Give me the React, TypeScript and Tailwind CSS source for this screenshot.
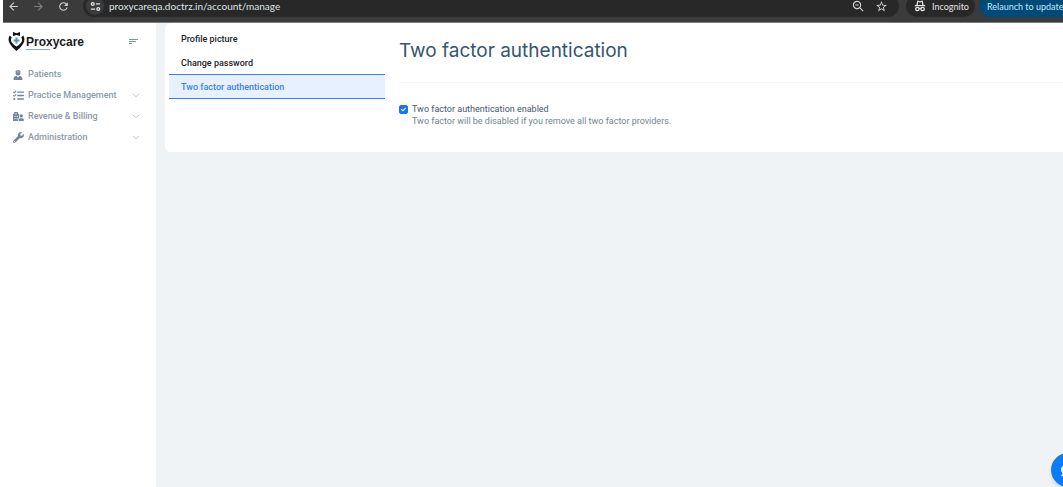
import React from "react";
import { FaTasks, FaHospitalUser, FaWrench, FaCheck, FaComment } from "react-icons/fa";
import { MdArrowBack, MdArrowForward, MdRefresh, MdStarBorder } from "react-icons/md";

function SiteSettingsIcon() {
  return (
    <svg viewBox="0 0 12 12" className="size-[11px]" fill="none" stroke="currentColor" strokeWidth="1.4">
      <circle cx="3" cy="3.2" r="1.5" />
      <path d="M6.5 3.2H11M1 8.8h4.5" />
      <circle cx="9" cy="8.8" r="1.5" />
    </svg>
  );
}

function ZoomOutIcon() {
  return (
    <svg viewBox="0 0 12 12" className="size-3" fill="none" stroke="currentColor" strokeWidth="1.2">
      <circle cx="5" cy="5" r="3.6" />
      <path d="M3.4 5h3.2M7.7 7.7l3.5 3.5" />
    </svg>
  );
}

function IncognitoIcon() {
  return (
    <svg viewBox="0 0 12 12" className="size-3" fill="none" stroke="currentColor" strokeWidth="1.3">
      <path d="M3 5 3.8 1.2 6 1.8l2.2-.6L9 5" />
      <path d="M.8 5.6h10.4" />
      <circle cx="3.4" cy="9" r="1.7" />
      <circle cx="8.6" cy="9" r="1.7" />
      <path d="M5 8.6q1-.6 2 0" />
    </svg>
  );
}

function PatientIcon() {
  return (
    <svg viewBox="0 0 10 10" className="size-[10px]" fill="currentColor">
      <path d="M2.6.8 5 0l2.4.8v2.4a2.4 2.4 0 0 1-4.8 0Z" />
      <path d="M.6 10V8.6Q.6 6.3 3.3 5.8L5 7.4l1.7-1.6q2.7.5 2.7 2.8V10Z" />
      <path d="M3.7 2h2.6" stroke="#fff" strokeWidth=".5" />
    </svg>
  );
}

function ChevronIcon() {
  return (
    <svg viewBox="0 0 8 5" className="h-[5px] w-2 shrink-0 text-[#b3bcc4]" fill="none" stroke="currentColor" strokeWidth="0.9">
      <path d="m1 .8 3 3 3-3" />
    </svg>
  );
}

function BrowserBar() {
  return (
    <header className="ml-[3px] flex h-[23px] items-end overflow-hidden border-b border-[#7a7a7a] bg-[#3b3b3b] pb-[5px] font-['Lato',sans-serif] text-[9px] leading-none text-[#e3e3e3]">
      <div className="flex h-[22px] w-20 shrink-0 items-center gap-3 pl-1 text-[13px]">
        <button aria-label="Back" className="text-[#d0d0d0]"><MdArrowBack /></button>
        <button aria-label="Forward" className="text-[#808080]"><MdArrowForward /></button>
        <button aria-label="Reload" className="text-[#d0d0d0]"><MdRefresh /></button>
      </div>
      <div className="flex h-[22px] grow items-center rounded-full bg-[#282828] pr-[11px]">
        <button aria-label="Site information" className="ml-[3px] flex size-[18px] items-center justify-center rounded-full bg-[#3b3b3b]">
          <SiteSettingsIcon />
        </button>
        <input
          aria-label="Address"
          className="h-3 min-w-0 grow bg-transparent pl-[5px] text-[10px] leading-3 text-[#dfe3e6] outline-none"
          defaultValue="proxycareqa.doctrz.in/account/manage"
        />
        <div className="flex items-center gap-[11px] text-[13px] text-[#d0d0d0]">
          <button aria-label="Zoom"><ZoomOutIcon /></button>
          <button aria-label="Bookmark"><MdStarBorder /></button>
        </div>
      </div>
      <div className="ml-[7px] flex h-[22px] w-[69px] shrink-0 items-center gap-1.5 rounded-full bg-[#282828] pl-2">
        <IncognitoIcon />
        <span>Incognito</span>
      </div>
      <button className="ml-1 flex h-[22px] w-[84px] shrink-0 items-center whitespace-nowrap rounded-l-full bg-[#004a77] pl-2 text-[#c2e7ff]">
        <span>Relaunch to update</span>
      </button>
    </header>
  );
}

function Logo() {
  return (
    <a href="#" className="flex items-center gap-px text-[#171a20]">
      <svg viewBox="0 0 17 19" className="h-[19px] w-[17px]">
        <path d="M1.800 3.500Q-.6 7 1.600 11.200 4 15.800 8.500 19 13 15.800 15.400 11.200 17.600 7 15.200 3.500L13.200 5.500Q15 8 13.200 10.500 11.500 12.800 8.500 14.500 5.500 12.800 3.800 10.500 2 8 3.800 5.500Z" fill="#10131a" />
        <path d="M5 0 8.500 1.200 12 0v4L8.500 2.900 5 4Z" fill="#10131a" />
        <path d="M8.500 5.500v6M5.500 8.500h6" stroke="#5b8fd9" strokeWidth="2" />
      </svg>
      <span className="relative font-['Liberation_Sans',sans-serif] text-[12px] leading-4 font-bold">
        Proxycare
        <span className="absolute bottom-0 left-0 h-px w-6 bg-[#7fa8e0]" />
      </span>
    </a>
  );
}

const menu = [
  { label: "Patients", icon: PatientIcon, expands: false },
  { label: "Practice Management", icon: FaTasks, expands: true },
  { label: "Revenue & Billing", icon: FaHospitalUser, expands: true },
  { label: "Administration", icon: FaWrench, expands: true },
];

function Sidebar() {
  return (
    <aside className="w-[156px] shrink-0 bg-white pt-[9px]">
      <div className="flex items-center justify-between pr-[17px] pl-2">
        <Logo />
        <button aria-label="Toggle menu" className="flex w-[10px] flex-col gap-px">
          <span className="h-px w-[9px] bg-[#7f93a3]" />
          <span className="h-px w-[7px] bg-[#7f93a3]" />
          <span className="h-px w-[3px] bg-[#7f93a3]" />
        </button>
      </div>
      <nav className="mt-[13px]">
        {menu.map(({ label, icon: Icon, expands }) => (
          <a key={label} href="#" className="flex h-[21px] items-center pr-4 pl-3 text-[9px] font-medium text-[#8d9ba8]">
            <span className="mr-1 flex w-3 shrink-0 justify-center text-[11px] text-[#748596]"><Icon /></span>
            <span className="grow whitespace-nowrap">{label}</span>
            {expands && <ChevronIcon />}
          </a>
        ))}
      </nav>
    </aside>
  );
}

function AccountCard() {
  return (
    <section className="flex rounded-l-md bg-white pb-[25px]">
      <nav className="ml-1 flex w-[216px] shrink-0 flex-col pt-1 text-[9px] font-medium text-[#22252b]">
        <a href="#" className="flex h-6 items-center px-3 pt-0.5">Profile picture</a>
        <a href="#" className="flex h-[23px] items-center px-3 pt-0.5">Change password</a>
        <a href="#" aria-current="page" className="flex h-[25px] items-center border-y border-[#3f80ea] bg-[#e7f0ff] px-3 pt-0.5 text-[#3b82f6]">
          Two factor authentication
        </a>
      </nav>
      <div className="ml-[14px] grow">
        <h1 className="border-b border-[#f5f6f8] pt-[14px] pb-[17px] font-['Inter',sans-serif] text-[19px] leading-7 text-[#34566f]">
          Two factor authentication
        </h1>
        <div className="mt-5 flex gap-1 text-[9px] leading-3">
          <span className="relative mt-[2px] size-[9px] shrink-0">
            <input
              id="two-factor"
              type="checkbox"
              defaultChecked
              className="peer block size-[9px] appearance-none rounded-[2px] border border-[#1677f2] checked:bg-[#1677f2]"
            />
            <FaCheck className="pointer-events-none invisible absolute inset-[2px] size-[5px] text-white peer-checked:visible" />
          </span>
          <div>
            <label htmlFor="two-factor" className="block text-[#405a70]">Two factor authentication enabled</label>
            <p className="text-[#738592]">Two factor will be disabled if you remove all two factor providers.</p>
          </div>
        </div>
      </div>
    </section>
  );
}

export default function App() {
  return (
    <div className="flex min-h-screen flex-col overflow-hidden bg-white font-['Roboto',sans-serif]">
      <BrowserBar />
      <div className="flex grow">
        <Sidebar />
        <main className="min-w-0 grow bg-[#eff3f6] pl-[9px]">
          <AccountCard />
        </main>
      </div>
      <button aria-label="Open chat" className="fixed -right-[22px] bottom-0 flex size-[34px] items-center rounded-full bg-[#087cff] pl-[10px] text-[14px] text-white shadow-md">
        <FaComment />
      </button>
    </div>
  );
}
